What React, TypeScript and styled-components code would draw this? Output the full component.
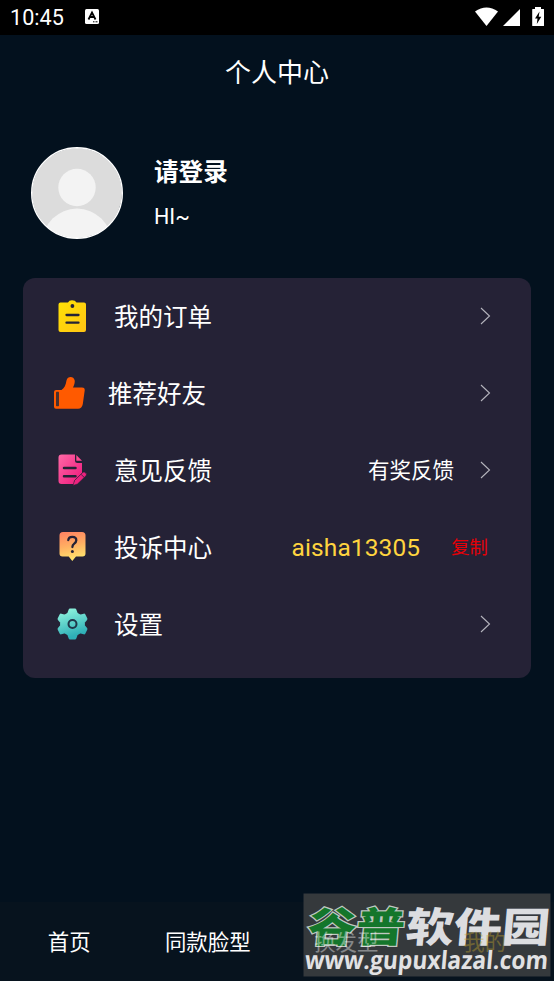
import React from "react";
import styled, { createGlobalStyle } from "styled-components";

const GlobalStyle = createGlobalStyle`
  * { box-sizing: border-box; }
  body { margin: 0; background: #03111e; }
`;

const Screen = styled.div`
  position: relative;
  display: flex;
  flex-direction: column;
  width: 554px;
  height: 981px;
  overflow: hidden;
  background: #03111e;
  color: #fff;
  font-family: Roboto, "Noto Sans CJK SC", sans-serif;
`;

const StatusBar = styled.header`
  display: flex;
  align-items: center;
  height: 35px;
  padding: 0 8px 2px 10px;
  background: #000;
`;

const Clock = styled.span`
  width: 74px;
  font-size: 21.6px;
  line-height: 26px;
  padding-top: 2px;
`;

const StatusIcons = styled.div`
  display: flex;
  margin-left: auto;
`;

const Title = styled.h1`
  margin: 0;
  height: 74px;
  padding-top: 1px;
  line-height: 75px;
  text-align: center;
  font-size: 26px;
  font-weight: 400;
`;

const Profile = styled.section`
  display: flex;
  align-items: center;
  height: 169px;
  padding: 0 0 2px 31px;
  gap: 31px;
`;

const ProfileText = styled.div`
  display: flex;
  flex-direction: column;
  gap: 8px;
  padding-top: 2px;
`;

const LoginName = styled.strong`
  font-size: 24.6px;
  font-weight: 700;
  line-height: 38px;
`;

const Greeting = styled.span`
  font-size: 21.5px;
  line-height: 34px;
  font-weight: 400;
`;

const Card = styled.main`
  display: flex;
  flex-direction: column;
  width: 508px;
  height: 400px;
  margin: 0 23px;
  border-radius: 12px;
  background: #252236;
`;

const Row = styled.div<{ $flush?: boolean }>`
  display: flex;
  align-items: center;
  height: 76.9px;
  padding: 0 40px 0 ${(p) => (p.$flush ? 29 : 33)}px;
`;

const RowIcon = styled.span<{ $gap: number }>`
  display: flex;
  width: 34px;
  margin-right: ${(p) => p.$gap}px;
`;

const Label = styled.span`
  flex: 1;
  padding-top: 3px;
  font-size: 24.5px;
  line-height: 36px;
`;

const Hint = styled.span`
  margin-right: 26px;
  padding-bottom: 3px;
  font-size: 21.5px;
`;

const Account = styled.span`
  margin-right: 31px;
  color: #ffd43f;
  font-size: 24.5px;
  letter-spacing: 0.1px;
`;

const Copy = styled.span`
  margin-right: 3px;
  padding-bottom: 2px;
  color: #e50008;
  font-size: 18.4px;
`;

const TabBar = styled.nav`
  display: grid;
  grid-template-columns: repeat(4, 1fr);
  align-items: center;
  height: 79px;
  margin-top: auto;
  padding-top: 3px;
  background: #07131e;
  text-align: center;
`;

const Tab = styled.span<{ $active?: boolean; $faded?: boolean }>`
  position: relative;
  z-index: ${(p) => (p.$faded ? 2 : 0)};
  font-size: 21.4px;
  line-height: 32px;
  opacity: ${(p) => (p.$faded ? 0.4 : 1)};
  color: ${(p) => (p.$active ? "#c4a52c" : "#fff")};
`;

const Watermark = styled.svg`
  position: absolute;
  z-index: 1;
  left: 303px;
  top: 893px;
`;

const CardIcon = ({ children }: { children: React.ReactNode }) => (
  <svg width="34" height="34" viewBox="0 0 34 34">{children}</svg>
);

const Arrow = () => (
  <svg width="11" height="18" viewBox="0 0 11 18" fill="none" stroke="#b5b4bd" strokeWidth="1.1">
    <path d="M1 1L9.500 9L1 17" />
  </svg>
);

const OrderIcon = () => (
  <CardIcon>
    <defs>
      <linearGradient id="order" x1="0" x2="1" y2="1">
        <stop stopColor="#ffe205" /><stop offset="1" stopColor="#ffc414" />
      </linearGradient>
    </defs>
    <path d="M4.500 3.500H12Q13 1.300 16 1.200Q19.300 1.300 20.500 3.500H28Q30 3.500 30 5.500V31Q30 33 28 33H4.500Q2.500 33 2.500 31V5.500Q2.500 3.500 4.500 3.500Z" fill="url(#order)" />
    <circle cx="16.400" cy="7" r="1.900" fill="#252236" />
    <path d="M10.500 16H22.500M10.500 23.700H22.500" stroke="#252236" strokeWidth="2.300" strokeLinecap="round" />
  </CardIcon>
);

const ThumbIcon = () => (
  <CardIcon>
    <path d="M4 14H9.500C12.500 12 13.800 9 14.500 4.500C15.300 .2 21.700-.2 22.700 4.500C23 7.500 21.800 9.500 21 11.500H30Q33 11.500 32.700 14.500L30.800 28Q30 32.500 26 32.800H4Q2 32.800 2 30.800V16Q2 14 4 14Z" fill="#ff5a00" />
    <rect x="4" y="15.800" width="3" height="14.500" rx=".7" fill="#49302f" />
  </CardIcon>
);

const FeedbackIcon = () => (
  <CardIcon>
    <defs>
      <linearGradient id="feedback" x1="0" y1="0" x2="1" y2="1">
        <stop stopColor="#ff69a6" /><stop offset="1" stopColor="#ee167b" />
      </linearGradient>
    </defs>
    <path d="M5.500 1.500H19V7.500Q19 10 21.500 10H26V20L18 28V31H5.500Q2.500 31 2.500 28V4.500Q2.500 1.500 5.500 1.500Z" fill="url(#feedback)" />
    <path d="M20.300 2L26 7.800H20.300Z" fill="#ff4b91" />
    <path d="M8 15H19.500M8 23.200H19.500" stroke="#252236" strokeWidth="2.500" strokeLinecap="round" />
    <path d="M17 32.500L18.500 27.500L27 19.200Q28.300 18.500 30 20.200Q31 21.700 30 22.800L21.500 31Z" fill="#ec227f" stroke="#252236" strokeWidth=".6" />
    <path d="M25.200 21.500L28.200 24.400" stroke="#252236" strokeWidth=".8" />
  </CardIcon>
);

const QuestionIcon = () => (
  <CardIcon>
    <defs>
      <linearGradient id="question" x1=".1" y1="0" x2=".3" y2="1">
        <stop stopColor="#ff8262" /><stop offset=".5" stopColor="#ffae62" /><stop offset="1" stopColor="#ffe46d" />
      </linearGradient>
    </defs>
    <path d="M7 2H26Q29.500 2 29.500 5.500V23.500Q29.500 26.500 26.500 26.500H20L16.300 31L12.700 26.500H6.500Q3.500 26.500 3.500 23.500V5.500Q3.500 2 7 2Z" fill="url(#question)" />
    <path d="M12.300 10Q12.600 6.800 16.300 6.800Q20.300 6.800 20.300 10.300Q20.300 12.300 18 13.900Q16.400 15 16.400 17" fill="none" stroke="#252236" strokeWidth="2.300" strokeLinecap="round" />
    <circle cx="16.400" cy="21.500" r="1.500" fill="#252236" />
  </CardIcon>
);

const GearIcon = () => (
  <CardIcon>
    <defs>
      <linearGradient id="gear" x1="0" y1="0" x2=".3" y2="1">
        <stop stopColor="#93f6df" /><stop offset="1" stopColor="#2eafb7" />
      </linearGradient>
    </defs>
    <path d="M14 3H19L20.500 7L24 9L28 8L30 12L27.500 15V19L30 22L28 26L24 25L20.500 27L19 31H14L12.500 27L9 25L5 26L3 22L5.500 19V15L3 12L5 8L9 9L12.500 7Z" fill="url(#gear)" stroke="url(#gear)" strokeWidth="2.800" strokeLinejoin="round" />
    <circle cx="16.500" cy="17" r="4" fill="none" stroke="#20364a" strokeWidth="2" />
  </CardIcon>
);

export default function App() {
  return (
    <Screen>
      <GlobalStyle />
      <StatusBar>
        <Clock>10:45</Clock>
        <svg width="17" height="17" viewBox="0 0 17 17">
          <rect x="1" y="1" width="14" height="15" rx="1.500" fill="#fff" />
          <path d="M4.500 11.500L8 4.500L11.500 11.500M6 9H10" stroke="#000" strokeWidth="1.800" fill="none" />
          <path d="M9 13.800H14" stroke="#000" strokeWidth="1" strokeDasharray="1 .5" />
        </svg>
        <StatusIcons>
          <svg width="71" height="22" viewBox="0 0 71 22" fill="#fff">
            <path d="M0 5.500Q11.500-2.500 23 5.500L11.500 20Z" />
            <path d="M45 3V20H28Z" />
            <path d="M60 3V1H66V3H68.500Q69 3 69 3.500V19.500Q69 20 68.500 20H57.700Q57.200 20 57.200 19.500V3.500Q57.200 3 57.700 3Z" />
            <path d="M64.500 5.500L60 12.500H62.500L61.800 18L66.300 10.800H63.700Z" fill="#000" />
          </svg>
        </StatusIcons>
      </StatusBar>

      <Title>个人中心</Title>

      <Profile>
        <svg width="92" height="92" viewBox="0 0 92 92">
          <defs><clipPath id="avatar"><circle cx="46" cy="46" r="45" /></clipPath></defs>
          <g clipPath="url(#avatar)">
            <rect width="92" height="92" fill="#dcdcdc" />
            <circle cx="46" cy="40.500" r="18.700" fill="#f3f3f3" />
            <circle cx="46" cy="96" r="34.500" fill="#f3f3f3" />
          </g>
          <circle cx="46" cy="46" r="45.300" fill="none" stroke="#fff" strokeWidth="1.400" />
        </svg>
        <ProfileText>
          <LoginName>请登录</LoginName>
          <Greeting>HI~</Greeting>
        </ProfileText>
      </Profile>

      <Card>
        <Row><RowIcon $gap={24}><OrderIcon /></RowIcon><Label>我的订单</Label><Arrow /></Row>
        <Row $flush><RowIcon $gap={22}><ThumbIcon /></RowIcon><Label>推荐好友</Label><Arrow /></Row>
        <Row><RowIcon $gap={24}><FeedbackIcon /></RowIcon><Label>意见反馈</Label><Hint>有奖反馈</Hint><Arrow /></Row>
        <Row><RowIcon $gap={24}><QuestionIcon /></RowIcon><Label>投诉中心</Label><Account>aisha13305</Account><Copy>复制</Copy></Row>
        <Row><RowIcon $gap={24}><GearIcon /></RowIcon><Label>设置</Label><Arrow /></Row>
      </Card>

      <TabBar>
        <Tab>首页</Tab>
        <Tab>同款脸型</Tab>
        <Tab $faded>换发型</Tab>
        <Tab $active $faded>我的</Tab>
      </TabBar>

      <Watermark width="248" height="84" viewBox="0 0 248 84">
        <rect x=".5" y=".5" width="247" height="83" fill="#35393c" />
        <g transform="skewX(-5)" fontFamily="Noto Sans CJK SC, sans-serif" fontWeight="900" fontSize="41">
          <text x="8" y="49.500" textLength="97" lengthAdjust="spacingAndGlyphs" fill="#14762b" stroke="#bfc8c2" strokeWidth="2.400" paintOrder="stroke">谷普</text>
          <text x="106" y="49.500" textLength="144" lengthAdjust="spacingAndGlyphs" fill="#dcdde0">软件园</text>
        </g>
        <text transform="skewX(-5)" x="8" y="76.500" textLength="243" lengthAdjust="spacingAndGlyphs" fontFamily="Open Sans, sans-serif" fontWeight="700" fontSize="25" fill="#e1e1e3">www.gupuxlazal.com</text>
      </Watermark>
    </Screen>
  );
}
